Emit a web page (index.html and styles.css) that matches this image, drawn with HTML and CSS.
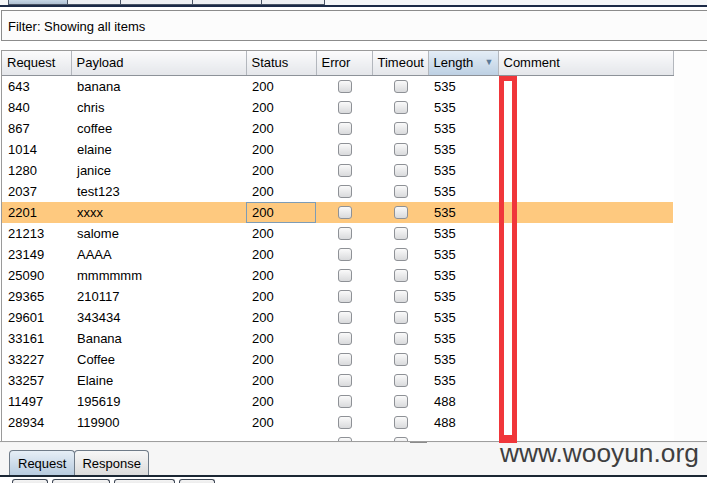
FILE: index.html
```html
<!DOCTYPE html>
<html lang="en">
  <head>
    <meta charset="UTF-8" />
    <title>Intruder results</title>
    <link rel="stylesheet" href="styles.css">
  </head>
  <body>
    <div class="stubs stubs_top">
      <span class="stub stub_active" style="width: 60px"></span>
      <span class="stub" style="width: 53px"></span>
      <span class="stub" style="width: 72px"></span>
      <span class="stub" style="width: 69px"></span>
      <span class="stub" style="width: 63px"></span>
    </div>

    <div class="filter">Filter: Showing all items</div>

    <div class="results">
      <table class="grid">
        <colgroup>
          <col style="width: 69px" />
          <col style="width: 175px" />
          <col style="width: 70px" />
          <col style="width: 56px" />
          <col style="width: 56px" />
          <col style="width: 70px" />
          <col style="width: 175px" />
        </colgroup>
        <thead>
          <tr>
            <th>Request</th>
            <th>Payload</th>
            <th>Status</th>
            <th>Error</th>
            <th>Timeout</th>
            <th class="sorted">Length <span class="arrow">&#9660;</span></th>
            <th>Comment</th>
          </tr>
        </thead>
        <tbody>
          <tr><td>643</td><td>banana</td><td>200</td><td class="c"><i class="box"></i></td><td class="c"><i class="box"></i></td><td>535</td><td></td></tr>
          <tr><td>840</td><td>chris</td><td>200</td><td class="c"><i class="box"></i></td><td class="c"><i class="box"></i></td><td>535</td><td></td></tr>
          <tr><td>867</td><td>coffee</td><td>200</td><td class="c"><i class="box"></i></td><td class="c"><i class="box"></i></td><td>535</td><td></td></tr>
          <tr><td>1014</td><td>elaine</td><td>200</td><td class="c"><i class="box"></i></td><td class="c"><i class="box"></i></td><td>535</td><td></td></tr>
          <tr><td>1280</td><td>janice</td><td>200</td><td class="c"><i class="box"></i></td><td class="c"><i class="box"></i></td><td>535</td><td></td></tr>
          <tr><td>2037</td><td>test123</td><td>200</td><td class="c"><i class="box"></i></td><td class="c"><i class="box"></i></td><td>535</td><td></td></tr>
          <tr class="selected"><td>2201</td><td>xxxx</td><td class="focus">200</td><td class="c"><i class="box"></i></td><td class="c"><i class="box"></i></td><td>535</td><td></td></tr>
          <tr><td>21213</td><td>salome</td><td>200</td><td class="c"><i class="box"></i></td><td class="c"><i class="box"></i></td><td>535</td><td></td></tr>
          <tr><td>23149</td><td>AAAA</td><td>200</td><td class="c"><i class="box"></i></td><td class="c"><i class="box"></i></td><td>535</td><td></td></tr>
          <tr><td>25090</td><td>mmmmmm</td><td>200</td><td class="c"><i class="box"></i></td><td class="c"><i class="box"></i></td><td>535</td><td></td></tr>
          <tr><td>29365</td><td>210117</td><td>200</td><td class="c"><i class="box"></i></td><td class="c"><i class="box"></i></td><td>535</td><td></td></tr>
          <tr><td>29601</td><td>343434</td><td>200</td><td class="c"><i class="box"></i></td><td class="c"><i class="box"></i></td><td>535</td><td></td></tr>
          <tr><td>33161</td><td>Banana</td><td>200</td><td class="c"><i class="box"></i></td><td class="c"><i class="box"></i></td><td>535</td><td></td></tr>
          <tr><td>33227</td><td>Coffee</td><td>200</td><td class="c"><i class="box"></i></td><td class="c"><i class="box"></i></td><td>535</td><td></td></tr>
          <tr><td>33257</td><td>Elaine</td><td>200</td><td class="c"><i class="box"></i></td><td class="c"><i class="box"></i></td><td>535</td><td></td></tr>
          <tr><td>11497</td><td>195619</td><td>200</td><td class="c"><i class="box"></i></td><td class="c"><i class="box"></i></td><td>488</td><td></td></tr>
          <tr><td>28934</td><td>119900</td><td>200</td><td class="c"><i class="box"></i></td><td class="c"><i class="box"></i></td><td>488</td><td></td></tr>
          <tr><td></td><td></td><td></td><td class="c"><i class="box"></i></td><td class="c"><i class="box"></i></td><td></td><td></td></tr>
        </tbody>
      </table>
    </div>
    <div class="splitter"><span class="splitter__grip"></span></div>

    <div class="bottom">
      <div class="tabs">
        <span class="tab tab_active">Request</span>
        <span class="tab">Response</span>
      </div>
    </div>
    <div class="stubs stubs_bottom">
      <span class="stub" style="width: 36px"></span>
      <span class="stub" style="width: 58px"></span>
      <span class="stub" style="width: 61px"></span>
      <span class="stub" style="width: 36px"></span>
    </div>

    <!-- annotation overlays -->
    <div class="mark"></div>
    <div class="watermark">www.wooyun.org</div>
  </body>
</html>
```

FILE: styles.css
```css
html,
body {
  margin: 0;
  padding: 0;
}
body {
  width: 707px;
  height: 483px;
  overflow: hidden;
  position: relative;
  background: #fff;
  font: 13px "Liberation Sans", Arial, sans-serif;
  color: #000;
}

/* ---------- tab stubs (cut off at top / bottom) ---------- */
.stubs {
  display: flex;
  gap: 0;
}
.stubs_top {
  height: 5px;
  padding-left: 8px;
  border-bottom: 2px solid #1b2a47;
  background: #f4f6f8;
}
.stubs_top .stub {
  height: 5px;
  box-sizing: border-box;
  border: 1px solid #4a5566;
  border-top: 0;
  border-left: 0;
  background: #eef0f3;
}
.stubs_top .stub_active {
  background: linear-gradient(#c5d5e5, #aebfd2);
  border-left: 1px solid #4a5566;
}
.stubs_bottom {
  height: 7px;
  padding: 2px 0 0 12px;
  gap: 4px;
  background: #fff;
}
.stubs_bottom .stub {
  height: 7px;
  box-sizing: border-box;
  border: 1px solid #3d4654;
  border-bottom: 0;
  border-radius: 3px 3px 0 0;
  background: linear-gradient(#f4f4f4, #e6e6e6);
}

/* ---------- filter ---------- */
.filter {
  margin: 3px 0 0 1px;
  height: 29px;
  line-height: 31px;
  padding-left: 6px;
  border: 1px solid #8c8c8c;
  border-right: 0;
  background: #fcfcfc;
}

/* ---------- results table ---------- */
.results {
  margin-top: 9px;
  margin-left: 1px;
  height: 390px;
  overflow: hidden;
  border-left: 1px solid #9a9a9a;
  border-top: 1px solid #9a9a9a;
  background: #fdfdfd;
}
.grid {
  border-collapse: collapse;
  table-layout: fixed;
  width: 671px;
  background: #fff;
}
.grid th {
  height: 24px;
  padding: 0 0 0 5px;
  line-height: 22px;
  text-align: left;
  font-weight: normal;
  white-space: nowrap;
  background: linear-gradient(#fbfbfc, #e4e6ea);
  border-right: 1px solid #b3b7bd;
  border-bottom: 1px solid #8d9299;
}
.grid th.sorted {
  background: linear-gradient(#e4edf6, #bdd0e3);
  position: relative;
}
.arrow {
  position: absolute;
  right: 4px;
  top: 7px;
  font-size: 9px;
  line-height: 9px;
  color: #5c7a98;
}
.grid td {
  height: 21px;
  padding: 0 0 0 6px;
  line-height: 21px;
  white-space: nowrap;
  box-sizing: border-box;
}
.grid td.c {
  text-align: center;
  padding: 0 0 0 1px;
}
.grid tr.selected td {
  background: #fec97f;
}
.grid td.focus {
  outline: 1px solid #7d9cb6;
  outline-offset: -1px;
}
.box {
  display: inline-block;
  width: 14px;
  height: 13px;
  box-sizing: border-box;
  vertical-align: middle;
  margin-top: -2px;
  border: 1px solid #8e9196;
  border-radius: 3px;
  background: linear-gradient(#fafafa, #d9dadc);
}

/* ---------- splitter ---------- */
.splitter {
  height: 1px;
  border-top: 1px solid #9e9e9e;
  background: #f2f2f2;
  position: relative;
}
.splitter__grip {
  position: absolute;
  left: 410px;
  top: 0;
  width: 17px;
  height: 1px;
  background: #8b8b8b;
}

/* ---------- bottom tabs ---------- */
.bottom {
  height: 32px;
  background: #f6f6f6;
  border-bottom: 2px solid #1b2734;
  display: flex;
  align-items: flex-end;
}
.tabs {
  display: flex;
  padding-left: 9px;
}
.tab {
  height: 25px;
  line-height: 25px;
  padding: 0 7px;
  box-sizing: border-box;
  border: 1px solid #6f7b88;
  border-bottom: 0;
  border-radius: 4px 4px 0 0;
  background: linear-gradient(#f7f7f7, #dcdcdc);
}
.tab + .tab {
  margin-left: -1px;
}
.tab_active {
  padding: 0 8px;
  background: linear-gradient(#e6eef6, #b7cbdf);
}

/* ---------- overlays ---------- */
.mark {
  position: absolute;
  left: 499px;
  top: 76px;
  width: 18px;
  height: 367px;
  box-sizing: border-box;
  border: 5px solid #f0363a;
  border-bottom-width: 8px;
}
.watermark {
  position: absolute;
  left: 500px;
  top: 438px;
  font: 26.3px "Liberation Sans", Arial, sans-serif;
  color: #3f3f3f;
}
```
